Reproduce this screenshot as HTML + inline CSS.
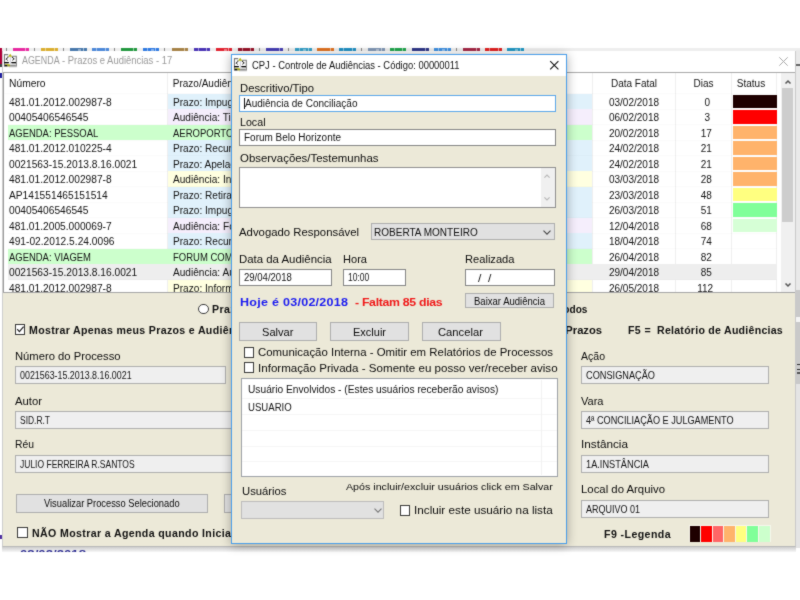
<!DOCTYPE html>
<html><head><meta charset="utf-8"><title>CPJ</title><style>
html,body{margin:0;padding:0;background:#fff;}
body{width:800px;height:600px;position:relative;overflow:hidden;font-family:"Liberation Sans",sans-serif;}
#pg{position:absolute;left:0;top:0;width:800px;height:600px;overflow:hidden;background:#fff;filter:url(#soft);}
.b{position:absolute;box-sizing:border-box;}
.t{position:absolute;white-space:pre;line-height:12px;font-family:"Liberation Sans",sans-serif;}
.c{position:absolute;overflow:hidden;}
svg{position:absolute;overflow:visible;}
</style></head><body><svg width="0" height="0" style="position:absolute"><filter id="soft" x="0" y="0" width="100%" height="100%" color-interpolation-filters="sRGB"><feConvolveMatrix order="3" kernelMatrix="0.025 0.075 0.025 0.075 0.6 0.075 0.025 0.075 0.025" edgeMode="duplicate" preserveAlpha="true"/></filter></svg><div id="pg">
<div class="b" style="left:0.00px;top:47.60px;width:800.00px;height:3.70px;background:#eeeeee;"></div>
<div class="b" style="left:0.00px;top:47.90px;width:2.00px;height:3.20px;background:#b00038;opacity:0.92;"></div>
<div class="b" style="left:13.00px;top:47.90px;width:16.00px;height:3.20px;background:#e6199a;opacity:0.92;"></div>
<div class="b" style="left:25.20px;top:47.90px;width:1.30px;height:3.20px;background:rgba(255,255,255,0.5);"></div>
<div class="b" style="left:41.00px;top:47.90px;width:17.00px;height:3.20px;background:#d8a820;opacity:0.92;"></div>
<div class="b" style="left:54.20px;top:47.90px;width:1.30px;height:3.20px;background:rgba(255,255,255,0.5);"></div>
<div class="b" style="left:44.60px;top:47.90px;width:1.40px;height:3.20px;background:rgba(255,255,255,0.45);"></div>
<div class="b" style="left:70.00px;top:47.90px;width:17.00px;height:3.20px;background:#3a6ea5;opacity:0.92;"></div>
<div class="b" style="left:83.20px;top:47.90px;width:1.30px;height:3.20px;background:rgba(255,255,255,0.5);"></div>
<div class="b" style="left:78.00px;top:48.60px;width:2.50px;height:2.50px;background:rgba(255,255,255,0.4);"></div>
<div class="b" style="left:92.00px;top:47.90px;width:17.00px;height:3.20px;background:#3f7fd6;opacity:0.92;"></div>
<div class="b" style="left:105.20px;top:47.90px;width:1.30px;height:3.20px;background:rgba(255,255,255,0.5);"></div>
<div class="b" style="left:95.60px;top:47.90px;width:1.40px;height:3.20px;background:rgba(255,255,255,0.45);"></div>
<div class="b" style="left:121.00px;top:47.90px;width:16.00px;height:3.20px;background:#109030;opacity:0.92;"></div>
<div class="b" style="left:133.20px;top:47.90px;width:1.30px;height:3.20px;background:rgba(255,255,255,0.5);"></div>
<div class="b" style="left:143.00px;top:47.90px;width:16.00px;height:3.20px;background:#2070e0;opacity:0.92;"></div>
<div class="b" style="left:155.20px;top:47.90px;width:1.30px;height:3.20px;background:rgba(255,255,255,0.5);"></div>
<div class="b" style="left:146.60px;top:47.90px;width:1.40px;height:3.20px;background:rgba(255,255,255,0.45);"></div>
<div class="b" style="left:151.00px;top:48.60px;width:2.50px;height:2.50px;background:rgba(255,255,255,0.4);"></div>
<div class="b" style="left:172.00px;top:47.90px;width:16.00px;height:3.20px;background:#a07838;opacity:0.92;"></div>
<div class="b" style="left:184.20px;top:47.90px;width:1.30px;height:3.20px;background:rgba(255,255,255,0.5);"></div>
<div class="b" style="left:194.00px;top:47.90px;width:16.00px;height:3.20px;background:#3c24b0;opacity:0.92;"></div>
<div class="b" style="left:206.20px;top:47.90px;width:1.30px;height:3.20px;background:rgba(255,255,255,0.5);"></div>
<div class="b" style="left:197.60px;top:47.90px;width:1.40px;height:3.20px;background:rgba(255,255,255,0.45);"></div>
<div class="b" style="left:216.00px;top:47.90px;width:16.00px;height:3.20px;background:#e01020;opacity:0.92;"></div>
<div class="b" style="left:228.20px;top:47.90px;width:1.30px;height:3.20px;background:rgba(255,255,255,0.5);"></div>
<div class="b" style="left:224.00px;top:48.60px;width:2.50px;height:2.50px;background:rgba(255,255,255,0.4);"></div>
<div class="b" style="left:238.00px;top:47.90px;width:16.00px;height:3.20px;background:#900018;opacity:0.92;"></div>
<div class="b" style="left:250.20px;top:47.90px;width:1.30px;height:3.20px;background:rgba(255,255,255,0.5);"></div>
<div class="b" style="left:241.60px;top:47.90px;width:1.40px;height:3.20px;background:rgba(255,255,255,0.45);"></div>
<div class="b" style="left:266.00px;top:47.90px;width:17.00px;height:3.20px;background:#3830b0;opacity:0.92;"></div>
<div class="b" style="left:279.20px;top:47.90px;width:1.30px;height:3.20px;background:rgba(255,255,255,0.5);"></div>
<div class="b" style="left:295.00px;top:47.90px;width:17.00px;height:3.20px;background:#2498c4;opacity:0.92;"></div>
<div class="b" style="left:308.20px;top:47.90px;width:1.30px;height:3.20px;background:rgba(255,255,255,0.5);"></div>
<div class="b" style="left:298.60px;top:47.90px;width:1.40px;height:3.20px;background:rgba(255,255,255,0.45);"></div>
<div class="b" style="left:303.00px;top:48.60px;width:2.50px;height:2.50px;background:rgba(255,255,255,0.4);"></div>
<div class="b" style="left:317.00px;top:47.90px;width:17.00px;height:3.20px;background:#e06810;opacity:0.92;"></div>
<div class="b" style="left:330.20px;top:47.90px;width:1.30px;height:3.20px;background:rgba(255,255,255,0.5);"></div>
<div class="b" style="left:339.00px;top:47.90px;width:17.00px;height:3.20px;background:#1088c0;opacity:0.92;"></div>
<div class="b" style="left:352.20px;top:47.90px;width:1.30px;height:3.20px;background:rgba(255,255,255,0.5);"></div>
<div class="b" style="left:342.60px;top:47.90px;width:1.40px;height:3.20px;background:rgba(255,255,255,0.45);"></div>
<div class="b" style="left:368.00px;top:47.90px;width:17.00px;height:3.20px;background:#7890b0;opacity:0.92;"></div>
<div class="b" style="left:381.20px;top:47.90px;width:1.30px;height:3.20px;background:rgba(255,255,255,0.5);"></div>
<div class="b" style="left:376.00px;top:48.60px;width:2.50px;height:2.50px;background:rgba(255,255,255,0.4);"></div>
<div class="b" style="left:390.00px;top:47.90px;width:16.00px;height:3.20px;background:#10a040;opacity:0.92;"></div>
<div class="b" style="left:402.20px;top:47.90px;width:1.30px;height:3.20px;background:rgba(255,255,255,0.5);"></div>
<div class="b" style="left:393.60px;top:47.90px;width:1.40px;height:3.20px;background:rgba(255,255,255,0.45);"></div>
<div class="b" style="left:412.00px;top:47.90px;width:17.00px;height:3.20px;background:#202880;opacity:0.92;"></div>
<div class="b" style="left:425.20px;top:47.90px;width:1.30px;height:3.20px;background:rgba(255,255,255,0.5);"></div>
<div class="b" style="left:434.00px;top:47.90px;width:17.00px;height:3.20px;background:#3088e0;opacity:0.92;"></div>
<div class="b" style="left:447.20px;top:47.90px;width:1.30px;height:3.20px;background:rgba(255,255,255,0.5);"></div>
<div class="b" style="left:437.60px;top:47.90px;width:1.40px;height:3.20px;background:rgba(255,255,255,0.45);"></div>
<div class="b" style="left:442.00px;top:48.60px;width:2.50px;height:2.50px;background:rgba(255,255,255,0.4);"></div>
<div class="b" style="left:463.00px;top:47.90px;width:17.00px;height:3.20px;background:#a01838;opacity:0.92;"></div>
<div class="b" style="left:476.20px;top:47.90px;width:1.30px;height:3.20px;background:rgba(255,255,255,0.5);"></div>
<div class="b" style="left:485.00px;top:47.90px;width:17.00px;height:3.20px;background:#e01010;opacity:0.92;"></div>
<div class="b" style="left:498.20px;top:47.90px;width:1.30px;height:3.20px;background:rgba(255,255,255,0.5);"></div>
<div class="b" style="left:488.60px;top:47.90px;width:1.40px;height:3.20px;background:rgba(255,255,255,0.45);"></div>
<div class="b" style="left:507.00px;top:47.90px;width:17.00px;height:3.20px;background:#1090c0;opacity:0.92;"></div>
<div class="b" style="left:520.20px;top:47.90px;width:1.30px;height:3.20px;background:rgba(255,255,255,0.5);"></div>
<div class="b" style="left:515.00px;top:48.60px;width:2.50px;height:2.50px;background:rgba(255,255,255,0.4);"></div>
<div class="b" style="left:6.00px;top:48.00px;width:1.00px;height:3.00px;background:#888;"></div>
<div class="b" style="left:34.00px;top:48.00px;width:1.00px;height:3.00px;background:#888;"></div>
<div class="b" style="left:63.00px;top:48.00px;width:1.00px;height:3.00px;background:#888;"></div>
<div class="b" style="left:114.00px;top:48.00px;width:1.00px;height:3.00px;background:#888;"></div>
<div class="b" style="left:164.00px;top:48.00px;width:1.00px;height:3.00px;background:#888;"></div>
<div class="b" style="left:259.00px;top:48.00px;width:1.00px;height:3.00px;background:#888;"></div>
<div class="b" style="left:288.00px;top:48.00px;width:1.00px;height:3.00px;background:#888;"></div>
<div class="b" style="left:361.00px;top:48.00px;width:1.00px;height:3.00px;background:#888;"></div>
<div class="b" style="left:456.00px;top:48.00px;width:1.00px;height:3.00px;background:#888;"></div>
<div class="b" style="left:0.00px;top:48.00px;width:1.60px;height:16.00px;background:#b00038;"></div>
<div class="b" style="left:0.00px;top:64.00px;width:2.00px;height:2.50px;background:#444;"></div>
<div class="b" style="left:0.00px;top:73.00px;width:1.60px;height:5.00px;background:#2020a0;"></div>
<div class="b" style="left:0.00px;top:535.00px;width:2.00px;height:4.00px;background:#5030a0;"></div>
<div class="b" style="left:796.00px;top:50.00px;width:4.00px;height:240.00px;background:#e9e9e9;"></div>
<div class="b" style="left:796.00px;top:64.00px;width:4.00px;height:1.60px;background:#666;"></div>
<div class="b" style="left:796.00px;top:290.00px;width:4.00px;height:94.00px;background:#c9c9c9;"></div>
<div class="b" style="left:796.00px;top:317.00px;width:4.00px;height:5.00px;background:#f4f4f4;"></div>
<div class="b" style="left:797.00px;top:363.60px;width:3.00px;height:1.60px;background:#333;"></div>
<div class="b" style="left:797.00px;top:368.60px;width:3.00px;height:1.60px;background:#333;"></div>
<div class="b" style="left:797.00px;top:372.40px;width:3.00px;height:1.20px;background:#555;"></div>
<div class="b" style="left:796.00px;top:384.00px;width:4.00px;height:164.00px;background:#e4e4e4;"></div>
<div class="b" style="left:2.00px;top:544.00px;width:794.00px;height:8.20px;background:linear-gradient(#c4c4c4 0%,#cfcfcf 40%,#f6f6f6 100%);"></div>
<span class="t" id="t0" style="top:548px;font-size:11px;color:#2a2a90;font-weight:bold;left:20.00px;transform-origin:0 10px;transform:scaleX(1.1986);">03/02/2018</span>
<div class="b" style="left:0.00px;top:552.00px;width:800.00px;height:20.00px;background:#fff;"></div>
<div class="b" style="left:2.00px;top:50.50px;width:794.00px;height:496.70px;background:#ECE9D8;border:1px solid #b9b9b9;border-top-color:#cfcfcf;border-right-color:#c9c9c9;border-left-color:#cdcdcd;"></div>
<div class="b" style="left:3.00px;top:51.30px;width:792.00px;height:21.00px;background:#fff;"></div>
<svg style="left:4.2px;top:54.0px" width="12.8" height="13.2" viewBox="0 0 12.8 13.2">
<rect x="0.4" y="0.6" width="12" height="12" fill="#fff"/>
<path d="M0.45 12.6V0.6H4.2M8.2 2.3H12.3V12.6" stroke="#7c7c7c" stroke-width="1.1" fill="none"/>
<rect x="5.85" y="2.6" width="0.7" height="7.8" fill="#b4b4c6"/>
<path d="M4.3 2.6L1.9 5.6M8.1 2.9L10.5 5.6" stroke="#222" stroke-width="1.15" fill="none" stroke-dasharray="1.4 0.4"/>
<path d="M2.4 5.1L3.7 6.6M8.6 6.6L9.6 4.9" stroke="#333" stroke-width="1" fill="none"/>
<path d="M0.3 7.9Q2.4 9.6 4.7 7.9V9.1H0.3ZM7.5 7.9Q9.6 9.6 11.9 7.9V9.1H7.5Z" fill="#000"/>
<rect x="0.3" y="8.0" width="4.4" height="1.35" fill="#000"/><rect x="7.5" y="8.0" width="4.4" height="1.35" fill="#000"/>
<polygon points="3.9,2.8 6.2,-0.3 8.4,2.8" fill="#b4b81c"/>
<rect x="1" y="10" width="4.8" height="0.9" fill="#c2c632"/><rect x="5.8" y="10" width="5.4" height="0.9" fill="#ddd"/>
<rect x="0.6" y="10.9" width="3" height="1.6" fill="#111"/><rect x="3.6" y="10.9" width="2.5" height="1.6" fill="#9a9e1c"/><rect x="6.1" y="10.9" width="5.7" height="1.6" fill="#8f8f8f"/>
<rect x="5" y="12.5" width="7.8" height="0.7" fill="#a5a5a5"/>
</svg>
<span class="t" id="t1" style="top:55px;font-size:10.3px;color:#9a9a9a;left:21.60px;transform-origin:0 9px;transform:scale(0.8644,1.0);">AGENDA</span>
<span class="t" id="t2" style="top:55px;font-size:10.3px;color:#9a9a9a;left:62.40px;transform-origin:0 9px;transform:scale(0.9168,1.0);">- Prazos e Audiências - 17</span>
<svg style="left:779.2px;top:56.5px" width="9" height="9" viewBox="0 0 9 9"><path d="M0.3 0.3L8.7 8.7M8.7 0.3L0.3 8.7" stroke="#a8a8a8" stroke-width="1" fill="none"/></svg>
<div class="b" style="left:3.00px;top:72.00px;width:792.00px;height:1.30px;background:#a9a9a9;"></div>
<div class="b" style="left:3.00px;top:73.30px;width:792.00px;height:219.50px;background:#fff;"></div>
<div class="b" style="left:167.10px;top:73.30px;width:1.00px;height:219.50px;background:#efefef;"></div>
<div class="b" style="left:591.90px;top:73.30px;width:1.00px;height:219.50px;background:#efefef;"></div>
<div class="b" style="left:674.50px;top:73.30px;width:1.00px;height:219.50px;background:#efefef;"></div>
<div class="b" style="left:731.30px;top:73.30px;width:1.00px;height:219.50px;background:#efefef;"></div>
<div class="b" style="left:776.10px;top:73.30px;width:1.00px;height:219.50px;background:#efefef;"></div>
<span class="t" id="t3" style="top:78px;font-size:10.0px;color:#121212;left:9.00px;transform-origin:0 9px;transform:scaleX(1.0287);">Número</span>
<span class="t" id="t4" style="top:78px;font-size:10.0px;color:#121212;left:172.80px;transform-origin:0 9px;transform:scaleX(1.0000);">Prazo/Audiência</span>
<span class="t" id="t5" style="top:78px;font-size:10.0px;color:#121212;left:634.00px;transform-origin:50% 9px;transform:translateX(-50%) scaleX(1.0000);">Data Fatal</span>
<span class="t" id="t6" style="top:78px;font-size:10.0px;color:#121212;left:703.60px;transform-origin:50% 9px;transform:translateX(-50%) scaleX(1.0000);">Dias</span>
<span class="t" id="t7" style="top:78px;font-size:10.0px;color:#121212;left:751.00px;transform-origin:50% 9px;transform:translateX(-50%) scaleX(1.0000);">Status</span>
<div class="b" style="left:167.60px;top:93.70px;width:424.80px;height:15.50px;background:#e0f1fb;"></div>
<div class="b" style="left:7.50px;top:108.70px;width:769.10px;height:1.00px;background:rgba(0,0,0,0.014);"></div>
<div class="b" style="left:733.00px;top:94.70px;width:44.20px;height:13.70px;background:#1e0000;"></div>
<span class="t" id="t8" style="top:97px;font-size:10.0px;color:#121212;left:9.30px;transform-origin:0 9px;transform:scaleX(1.0200);">481.01.2012.002987-8</span>
<span class="t" id="t9" style="top:97px;font-size:10.0px;color:#121212;left:172.80px;transform-origin:0 9px;transform:scaleX(1.0100);">Prazo: Impugnação</span>
<span class="t" id="t10" style="top:97px;font-size:10.0px;color:#121212;left:634.00px;transform-origin:50% 9px;transform:translateX(-50%) scaleX(1.0000);">03/02/2018</span>
<span class="t" id="t11" style="top:97px;font-size:10.0px;color:#121212;left:707.20px;transform-origin:50% 9px;transform:translateX(-50%) scaleX(1.0000);">0</span>
<div class="b" style="left:167.60px;top:109.20px;width:424.80px;height:15.50px;background:#f5eefc;"></div>
<div class="b" style="left:7.50px;top:124.20px;width:769.10px;height:1.00px;background:rgba(0,0,0,0.014);"></div>
<div class="b" style="left:733.00px;top:110.20px;width:44.20px;height:13.70px;background:#ff0000;"></div>
<span class="t" id="t12" style="top:112px;font-size:10.0px;color:#121212;left:9.30px;transform-origin:0 9px;transform:scaleX(1.0200);">00405406546545</span>
<span class="t" id="t13" style="top:112px;font-size:10.0px;color:#121212;left:172.80px;transform-origin:0 9px;transform:scaleX(1.0100);">Audiência: Tipo</span>
<span class="t" id="t14" style="top:112px;font-size:10.0px;color:#121212;left:634.00px;transform-origin:50% 9px;transform:translateX(-50%) scaleX(1.0000);">06/02/2018</span>
<span class="t" id="t15" style="top:112px;font-size:10.0px;color:#121212;left:707.20px;transform-origin:50% 9px;transform:translateX(-50%) scaleX(1.0000);">3</span>
<div class="b" style="left:7.50px;top:124.70px;width:584.90px;height:15.50px;background:#ccffcc;"></div>
<div class="b" style="left:7.50px;top:139.70px;width:769.10px;height:1.00px;background:rgba(0,0,0,0.014);"></div>
<div class="b" style="left:733.00px;top:125.70px;width:44.20px;height:13.70px;background:#ffb36b;"></div>
<span class="t" id="t16" style="top:128px;font-size:10.0px;color:#121212;left:9.30px;transform-origin:0 9px;transform:scaleX(0.9450);">AGENDA: PESSOAL</span>
<span class="t" id="t17" style="top:128px;font-size:10.0px;color:#121212;left:172.80px;transform-origin:0 9px;transform:scaleX(0.9500);">AEROPORTO</span>
<span class="t" id="t18" style="top:128px;font-size:10.0px;color:#121212;left:634.00px;transform-origin:50% 9px;transform:translateX(-50%) scaleX(1.0000);">20/02/2018</span>
<span class="t" id="t19" style="top:128px;font-size:10.0px;color:#121212;left:706.30px;transform-origin:50% 9px;transform:translateX(-50%) scaleX(1.0000);">17</span>
<div class="b" style="left:167.60px;top:140.20px;width:424.80px;height:15.50px;background:#e0f1fb;"></div>
<div class="b" style="left:7.50px;top:155.20px;width:769.10px;height:1.00px;background:rgba(0,0,0,0.014);"></div>
<div class="b" style="left:733.00px;top:141.20px;width:44.20px;height:13.70px;background:#ffb36b;"></div>
<span class="t" id="t20" style="top:143px;font-size:10.0px;color:#121212;left:9.30px;transform-origin:0 9px;transform:scaleX(1.0200);">481.01.2012.010225-4</span>
<span class="t" id="t21" style="top:143px;font-size:10.0px;color:#121212;left:172.80px;transform-origin:0 9px;transform:scaleX(1.0100);">Prazo: Recurso</span>
<span class="t" id="t22" style="top:143px;font-size:10.0px;color:#121212;left:634.00px;transform-origin:50% 9px;transform:translateX(-50%) scaleX(1.0000);">24/02/2018</span>
<span class="t" id="t23" style="top:143px;font-size:10.0px;color:#121212;left:706.30px;transform-origin:50% 9px;transform:translateX(-50%) scaleX(1.0000);">21</span>
<div class="b" style="left:167.60px;top:155.70px;width:424.80px;height:15.50px;background:#e0f1fb;"></div>
<div class="b" style="left:7.50px;top:170.70px;width:769.10px;height:1.00px;background:rgba(0,0,0,0.014);"></div>
<div class="b" style="left:733.00px;top:156.70px;width:44.20px;height:13.70px;background:#ffb36b;"></div>
<span class="t" id="t24" style="top:159px;font-size:10.0px;color:#121212;left:9.30px;transform-origin:0 9px;transform:scaleX(1.0200);">0021563-15.2013.8.16.0021</span>
<span class="t" id="t25" style="top:159px;font-size:10.0px;color:#121212;left:172.80px;transform-origin:0 9px;transform:scaleX(1.0100);">Prazo: Apelação</span>
<span class="t" id="t26" style="top:159px;font-size:10.0px;color:#121212;left:634.00px;transform-origin:50% 9px;transform:translateX(-50%) scaleX(1.0000);">24/02/2018</span>
<span class="t" id="t27" style="top:159px;font-size:10.0px;color:#121212;left:706.30px;transform-origin:50% 9px;transform:translateX(-50%) scaleX(1.0000);">21</span>
<div class="b" style="left:167.60px;top:171.20px;width:424.80px;height:15.50px;background:#ffffe0;"></div>
<div class="b" style="left:7.50px;top:186.20px;width:769.10px;height:1.00px;background:rgba(0,0,0,0.014);"></div>
<div class="b" style="left:733.00px;top:172.20px;width:44.20px;height:13.70px;background:#ffb36b;"></div>
<span class="t" id="t28" style="top:174px;font-size:10.0px;color:#121212;left:9.30px;transform-origin:0 9px;transform:scaleX(1.0200);">481.01.2012.002987-8</span>
<span class="t" id="t29" style="top:174px;font-size:10.0px;color:#121212;left:172.80px;transform-origin:0 9px;transform:scaleX(1.0100);">Audiência: Instrução</span>
<span class="t" id="t30" style="top:174px;font-size:10.0px;color:#121212;left:634.00px;transform-origin:50% 9px;transform:translateX(-50%) scaleX(1.0000);">03/03/2018</span>
<span class="t" id="t31" style="top:174px;font-size:10.0px;color:#121212;left:706.30px;transform-origin:50% 9px;transform:translateX(-50%) scaleX(1.0000);">28</span>
<div class="b" style="left:167.60px;top:186.70px;width:424.80px;height:15.50px;background:#e0f1fb;"></div>
<div class="b" style="left:7.50px;top:201.70px;width:769.10px;height:1.00px;background:rgba(0,0,0,0.014);"></div>
<div class="b" style="left:733.00px;top:187.70px;width:44.20px;height:13.70px;background:#ffff80;"></div>
<span class="t" id="t32" style="top:190px;font-size:10.0px;color:#121212;left:9.30px;transform-origin:0 9px;transform:scaleX(1.0200);">AP141551465151514</span>
<span class="t" id="t33" style="top:190px;font-size:10.0px;color:#121212;left:172.80px;transform-origin:0 9px;transform:scaleX(1.0100);">Prazo: Retirar</span>
<span class="t" id="t34" style="top:190px;font-size:10.0px;color:#121212;left:634.00px;transform-origin:50% 9px;transform:translateX(-50%) scaleX(1.0000);">23/03/2018</span>
<span class="t" id="t35" style="top:190px;font-size:10.0px;color:#121212;left:706.30px;transform-origin:50% 9px;transform:translateX(-50%) scaleX(1.0000);">48</span>
<div class="b" style="left:167.60px;top:202.20px;width:424.80px;height:15.50px;background:#e0f1fb;"></div>
<div class="b" style="left:7.50px;top:217.20px;width:769.10px;height:1.00px;background:rgba(0,0,0,0.014);"></div>
<div class="b" style="left:733.00px;top:203.20px;width:44.20px;height:13.70px;background:#80ff99;"></div>
<span class="t" id="t36" style="top:205px;font-size:10.0px;color:#121212;left:9.30px;transform-origin:0 9px;transform:scaleX(1.0200);">00405406546545</span>
<span class="t" id="t37" style="top:205px;font-size:10.0px;color:#121212;left:172.80px;transform-origin:0 9px;transform:scaleX(1.0100);">Prazo: Impugnação</span>
<span class="t" id="t38" style="top:205px;font-size:10.0px;color:#121212;left:634.00px;transform-origin:50% 9px;transform:translateX(-50%) scaleX(1.0000);">26/03/2018</span>
<span class="t" id="t39" style="top:205px;font-size:10.0px;color:#121212;left:706.30px;transform-origin:50% 9px;transform:translateX(-50%) scaleX(1.0000);">51</span>
<div class="b" style="left:167.60px;top:217.70px;width:424.80px;height:15.50px;background:#f5eefc;"></div>
<div class="b" style="left:7.50px;top:232.70px;width:769.10px;height:1.00px;background:rgba(0,0,0,0.014);"></div>
<div class="b" style="left:733.00px;top:218.70px;width:44.20px;height:13.70px;background:#d6ffd6;"></div>
<span class="t" id="t40" style="top:221px;font-size:10.0px;color:#121212;left:9.30px;transform-origin:0 9px;transform:scaleX(1.0200);">481.01.2005.000069-7</span>
<span class="t" id="t41" style="top:221px;font-size:10.0px;color:#121212;left:172.80px;transform-origin:0 9px;transform:scaleX(1.0100);">Audiência: Forum</span>
<span class="t" id="t42" style="top:221px;font-size:10.0px;color:#121212;left:634.00px;transform-origin:50% 9px;transform:translateX(-50%) scaleX(1.0000);">12/04/2018</span>
<span class="t" id="t43" style="top:221px;font-size:10.0px;color:#121212;left:706.30px;transform-origin:50% 9px;transform:translateX(-50%) scaleX(1.0000);">68</span>
<div class="b" style="left:167.60px;top:233.20px;width:424.80px;height:15.50px;background:#e0f1fb;"></div>
<div class="b" style="left:7.50px;top:248.20px;width:769.10px;height:1.00px;background:rgba(0,0,0,0.014);"></div>
<span class="t" id="t44" style="top:236px;font-size:10.0px;color:#121212;left:9.30px;transform-origin:0 9px;transform:scaleX(1.0200);">491-02.2012.5.24.0096</span>
<span class="t" id="t45" style="top:236px;font-size:10.0px;color:#121212;left:172.80px;transform-origin:0 9px;transform:scaleX(1.0100);">Prazo: Recurso</span>
<span class="t" id="t46" style="top:236px;font-size:10.0px;color:#121212;left:634.00px;transform-origin:50% 9px;transform:translateX(-50%) scaleX(1.0000);">18/04/2018</span>
<span class="t" id="t47" style="top:236px;font-size:10.0px;color:#121212;left:706.30px;transform-origin:50% 9px;transform:translateX(-50%) scaleX(1.0000);">74</span>
<div class="b" style="left:7.50px;top:248.70px;width:584.90px;height:15.50px;background:#ccffcc;"></div>
<div class="b" style="left:7.50px;top:263.70px;width:769.10px;height:1.00px;background:rgba(0,0,0,0.014);"></div>
<span class="t" id="t48" style="top:252px;font-size:10.0px;color:#121212;left:9.30px;transform-origin:0 9px;transform:scaleX(0.9450);">AGENDA: VIAGEM</span>
<span class="t" id="t49" style="top:252px;font-size:10.0px;color:#121212;left:172.80px;transform-origin:0 9px;transform:scaleX(0.9500);">FORUM COMARCA</span>
<span class="t" id="t50" style="top:252px;font-size:10.0px;color:#121212;left:634.00px;transform-origin:50% 9px;transform:translateX(-50%) scaleX(1.0000);">26/04/2018</span>
<span class="t" id="t51" style="top:252px;font-size:10.0px;color:#121212;left:706.30px;transform-origin:50% 9px;transform:translateX(-50%) scaleX(1.0000);">82</span>
<div class="b" style="left:7.50px;top:264.20px;width:769.10px;height:15.50px;background:#eeeeee;"></div>
<div class="b" style="left:7.50px;top:279.20px;width:769.10px;height:1.00px;background:rgba(0,0,0,0.014);"></div>
<span class="t" id="t52" style="top:267px;font-size:10.0px;color:#121212;left:9.30px;transform-origin:0 9px;transform:scaleX(1.0200);">0021563-15.2013.8.16.0021</span>
<span class="t" id="t53" style="top:267px;font-size:10.0px;color:#121212;left:172.80px;transform-origin:0 9px;transform:scaleX(1.0100);">Audiência: Audiência</span>
<span class="t" id="t54" style="top:267px;font-size:10.0px;color:#121212;left:634.00px;transform-origin:50% 9px;transform:translateX(-50%) scaleX(1.0000);">29/04/2018</span>
<span class="t" id="t55" style="top:267px;font-size:10.0px;color:#121212;left:706.30px;transform-origin:50% 9px;transform:translateX(-50%) scaleX(1.0000);">85</span>
<div class="b" style="left:167.60px;top:279.70px;width:424.80px;height:12.70px;background:#ffffe0;"></div>
<span class="t" id="t56" style="top:283px;font-size:10.0px;color:#121212;left:9.30px;transform-origin:0 9px;transform:scaleX(1.0200);">481.01.2012.002987-8</span>
<span class="t" id="t57" style="top:283px;font-size:10.0px;color:#121212;left:172.80px;transform-origin:0 9px;transform:scaleX(1.0100);">Prazo: Informar</span>
<span class="t" id="t58" style="top:283px;font-size:10.0px;color:#121212;left:634.00px;transform-origin:50% 9px;transform:translateX(-50%) scaleX(1.0000);">26/05/2018</span>
<span class="t" id="t59" style="top:283px;font-size:10.0px;color:#121212;left:705.20px;transform-origin:50% 9px;transform:translateX(-50%) scaleX(1.0000);">112</span>
<div class="b" style="left:3.00px;top:93.20px;width:773.60px;height:1.00px;background:rgba(0,0,0,0.014);"></div>
<div class="b" style="left:781.00px;top:73.30px;width:13.60px;height:219.50px;background:#f0f0f0;"></div>
<div class="b" style="left:781.80px;top:88.00px;width:11.60px;height:134.00px;background:#cdcdcd;"></div>
<svg style="left:784.5px;top:79.6px" width="6" height="4" viewBox="0 0 6 4"><path d="M0.5 3.6L3 1L5.5 3.6" stroke="#555" stroke-width="1.5" fill="none"/></svg>
<svg style="left:784.5px;top:283.4px" width="6" height="4" viewBox="0 0 6 4"><path d="M0.5 0.4L3 3L5.5 0.4" stroke="#555" stroke-width="1.5" fill="none"/></svg>
<div class="b" style="left:2.50px;top:73.30px;width:1.00px;height:219.50px;background:#9a9a9a;"></div>
<div class="b" style="left:3.00px;top:292.20px;width:792.00px;height:1.20px;background:#a5a5a5;"></div>
<div class="b" style="left:198.20px;top:303.80px;width:10.60px;height:10.60px;background:#fff;border:1px solid #3a3a3a;border-radius:50%;"></div>
<span class="t" id="t60" style="top:304px;font-size:10.4px;color:#111;font-weight:bold;letter-spacing:0.400px;left:212.40px;transform-origin:0 9px;transform:scaleX(1.0200);">Prazos</span>
<div class="b" style="left:14.80px;top:324.20px;width:10.60px;height:10.60px;background:#fff;border:1px solid #3a3a3a;"></div>
<svg style="left:14.8px;top:324.2px" width="10.6" height="10.6" viewBox="0 0 10.6 10.6"><path d="M2.2 5.2L4.4 7.6L8.6 2.6" stroke="#222" stroke-width="1.25" fill="none"/></svg>
<span class="t" id="t61" style="top:325px;font-size:10.4px;color:#111;font-weight:bold;letter-spacing:0.320px;left:29.00px;transform-origin:0 9px;transform:scaleX(1.0200);">Mostrar Apenas meus Prazos e Audiências</span>
<span class="t" id="t62" style="top:351px;font-size:10.4px;color:#0c0c0c;left:15.00px;transform-origin:0 9px;transform:scaleX(1.0819);">Número do Processo</span>
<div class="b" style="left:15.10px;top:366.20px;width:210.50px;height:18.00px;background:#efefef;border:1px solid #aeaeae;"></div>
<span class="t" id="t63" style="top:370px;font-size:10.3px;color:#121212;left:20.40px;transform-origin:0 9px;transform:scale(0.8624,1.09);">0021563-15.2013.8.16.0021</span>
<span class="t" id="t64" style="top:396px;font-size:10.4px;color:#0c0c0c;left:15.00px;transform-origin:0 9px;transform:scaleX(1.0868);">Autor</span>
<div class="b" style="left:15.10px;top:410.70px;width:424.90px;height:17.90px;background:#efefef;border:1px solid #aeaeae;"></div>
<span class="t" id="t65" style="top:415px;font-size:10.3px;color:#121212;left:20.40px;transform-origin:0 9px;transform:scale(0.8191,1.09);">SID.R.T</span>
<span class="t" id="t66" style="top:439px;font-size:10.4px;color:#0c0c0c;left:15.00px;transform-origin:0 9px;transform:scaleX(0.9967);">Réu</span>
<div class="b" style="left:15.10px;top:454.80px;width:424.90px;height:18.20px;background:#efefef;border:1px solid #aeaeae;"></div>
<span class="t" id="t67" style="top:459px;font-size:10.3px;color:#121212;left:20.40px;transform-origin:0 9px;transform:scale(0.8253,1.09);">JULIO FERREIRA R.SANTOS</span>
<div class="b" style="left:16.00px;top:494.00px;width:191.60px;height:18.60px;background:#e1e1e1;border:1px solid #adadad;"></div>
<span class="t" id="t68" style="top:498px;font-size:10.3px;color:#0c0c0c;left:44.40px;transform-origin:0 9px;transform:scaleX(0.9053);">Visualizar Processo Selecionado</span>
<div class="b" style="left:223.50px;top:494.00px;width:191.50px;height:18.60px;background:#e1e1e1;border:1px solid #adadad;"></div>
<div class="b" style="left:17.20px;top:526.90px;width:10.80px;height:10.80px;background:#fff;border:1px solid #3a3a3a;"></div>
<span class="t" id="t69" style="top:528px;font-size:10.4px;color:#111;font-weight:bold;letter-spacing:0.360px;left:31.50px;transform-origin:0 9px;transform:scaleX(1.0200);">NÃO Mostrar a Agenda quando Iniciar</span>
<span class="t" id="t70" style="top:304px;font-size:10.4px;color:#111;font-weight:bold;right:212.70px;transform-origin:100% 9px;transform:scaleX(0.9700);">Todos</span>
<span class="t" id="t71" style="top:325px;font-size:10.4px;color:#111;font-weight:bold;right:198.00px;transform-origin:100% 9px;transform:scaleX(1.0800);">Prazos</span>
<span class="t" id="t72" style="top:325px;font-size:10.4px;color:#111;font-weight:bold;letter-spacing:0.388px;left:628.40px;transform-origin:0 9px;transform:scaleX(1.0200);">F5 =</span>
<span class="t" id="t73" style="top:325px;font-size:10.4px;color:#111;font-weight:bold;letter-spacing:0.241px;left:656.60px;transform-origin:0 9px;transform:scaleX(1.0200);">Relatório de Audiências</span>
<span class="t" id="t74" style="top:351px;font-size:10.4px;color:#0c0c0c;left:581.00px;transform-origin:0 9px;transform:scaleX(1.0132);">Ação</span>
<div class="b" style="left:580.50px;top:366.20px;width:188.90px;height:18.00px;background:#efefef;border:1px solid #aeaeae;"></div>
<span class="t" id="t75" style="top:370px;font-size:10.3px;color:#121212;left:586.40px;transform-origin:0 9px;transform:scale(0.8932,1.09);">CONSIGNAÇÃO</span>
<span class="t" id="t76" style="top:396px;font-size:10.4px;color:#0c0c0c;left:581.00px;transform-origin:0 9px;transform:scaleX(1.0619);">Vara</span>
<div class="b" style="left:580.50px;top:410.70px;width:188.90px;height:17.90px;background:#efefef;border:1px solid #aeaeae;"></div>
<span class="t" id="t77" style="top:415px;font-size:10.3px;color:#121212;left:586.40px;transform-origin:0 9px;transform:scale(0.8885,1.09);">4ª CONCILIAÇÃO E JULGAMENTO</span>
<span class="t" id="t78" style="top:439px;font-size:10.4px;color:#0c0c0c;left:581.00px;transform-origin:0 9px;transform:scaleX(1.1300);">Instância</span>
<div class="b" style="left:580.50px;top:454.80px;width:188.90px;height:18.20px;background:#efefef;border:1px solid #aeaeae;"></div>
<span class="t" id="t79" style="top:459px;font-size:10.3px;color:#121212;left:586.40px;transform-origin:0 9px;transform:scale(0.8950,1.09);">1A.INSTÂNCIA</span>
<span class="t" id="t80" style="top:484px;font-size:10.4px;color:#0c0c0c;left:581.00px;transform-origin:0 9px;transform:scaleX(1.0931);">Local do Arquivo</span>
<div class="b" style="left:580.50px;top:499.80px;width:188.90px;height:18.20px;background:#efefef;border:1px solid #aeaeae;"></div>
<span class="t" id="t81" style="top:504px;font-size:10.3px;color:#121212;left:586.40px;transform-origin:0 9px;transform:scale(0.8736,1.09);">ARQUIVO 01</span>
<span class="t" id="t82" style="top:529px;font-size:10.4px;color:#111;font-weight:bold;letter-spacing:0.408px;left:603.50px;transform-origin:0 9px;transform:scaleX(1.0200);">F9 -Legenda</span>
<div class="b" style="left:689.30px;top:525.40px;width:81.40px;height:16.20px;background:#f7f5ec;"></div>
<div class="b" style="left:689.60px;top:525.50px;width:10.50px;height:16.00px;background:#1e0000;"></div>
<div class="b" style="left:701.17px;top:525.50px;width:10.50px;height:16.00px;background:#ff0000;"></div>
<div class="b" style="left:712.74px;top:525.50px;width:10.50px;height:16.00px;background:#ff6666;"></div>
<div class="b" style="left:724.31px;top:525.50px;width:10.50px;height:16.00px;background:#ffb36b;"></div>
<div class="b" style="left:735.88px;top:525.50px;width:10.50px;height:16.00px;background:#ffff80;"></div>
<div class="b" style="left:747.45px;top:525.50px;width:10.50px;height:16.00px;background:#80ff99;"></div>
<div class="b" style="left:759.02px;top:525.50px;width:10.50px;height:16.00px;background:#ccffcc;"></div>
<div class="b" style="left:231.00px;top:54.20px;width:336.00px;height:489.80px;background:#ECE9D8;border:1px solid #4a9eea;box-shadow:0 1px 10px rgba(0,0,0,0.32);"></div>
<div class="b" style="left:232.00px;top:55.20px;width:334.00px;height:20.40px;background:#fff;"></div>
<svg style="left:234.1px;top:58.2px" width="12.8" height="13.2" viewBox="0 0 12.8 13.2">
<rect x="0.4" y="0.6" width="12" height="12" fill="#fff"/>
<path d="M0.45 12.6V0.6H4.2M8.2 2.3H12.3V12.6" stroke="#7c7c7c" stroke-width="1.1" fill="none"/>
<rect x="5.85" y="2.6" width="0.7" height="7.8" fill="#b4b4c6"/>
<path d="M4.3 2.6L1.9 5.6M8.1 2.9L10.5 5.6" stroke="#222" stroke-width="1.15" fill="none" stroke-dasharray="1.4 0.4"/>
<path d="M2.4 5.1L3.7 6.6M8.6 6.6L9.6 4.9" stroke="#333" stroke-width="1" fill="none"/>
<path d="M0.3 7.9Q2.4 9.6 4.7 7.9V9.1H0.3ZM7.5 7.9Q9.6 9.6 11.9 7.9V9.1H7.5Z" fill="#000"/>
<rect x="0.3" y="8.0" width="4.4" height="1.35" fill="#000"/><rect x="7.5" y="8.0" width="4.4" height="1.35" fill="#000"/>
<polygon points="3.9,2.8 6.2,-0.3 8.4,2.8" fill="#b4b81c"/>
<rect x="1" y="10" width="4.8" height="0.9" fill="#c2c632"/><rect x="5.8" y="10" width="5.4" height="0.9" fill="#ddd"/>
<rect x="0.6" y="10.9" width="3" height="1.6" fill="#111"/><rect x="3.6" y="10.9" width="2.5" height="1.6" fill="#9a9e1c"/><rect x="6.1" y="10.9" width="5.7" height="1.6" fill="#8f8f8f"/>
<rect x="5" y="12.5" width="7.8" height="0.7" fill="#a5a5a5"/>
</svg>
<span class="t" id="t83" style="top:60px;font-size:10.3px;color:#121212;left:252.00px;transform-origin:0 9px;transform:scale(0.9143,1.04);">CPJ - Controle de Audiências - Código: 00000011</span>
<svg style="left:549.7px;top:61px" width="8.6" height="8.6" viewBox="0 0 9 9"><path d="M0.2 0.2L8.8 8.8M8.8 0.2L0.2 8.8" stroke="#111" stroke-width="1.15" fill="none"/></svg>
<span class="t" id="t84" style="top:83px;font-size:10.4px;color:#0c0c0c;left:239.50px;transform-origin:0 9px;transform:scaleX(1.0830);">Descritivo/Tipo</span>
<div class="b" style="left:238.90px;top:94.60px;width:317.10px;height:17.00px;background:#fff;border:1px solid #5aa6ea;"></div>
<div class="b" style="left:244.20px;top:97.60px;width:1.00px;height:11.50px;background:#111;"></div>
<span class="t" id="t85" style="top:98px;font-size:10.0px;color:#121212;left:245.00px;transform-origin:0 9px;transform:scaleX(1.0018);">Audiência de Conciliação</span>
<span class="t" id="t86" style="top:117px;font-size:10.4px;color:#0c0c0c;left:239.50px;transform-origin:0 9px;transform:scaleX(1.0264);">Local</span>
<div class="b" style="left:238.90px;top:129.20px;width:317.10px;height:16.60px;background:#fff;border:1px solid #858585;"></div>
<span class="t" id="t87" style="top:132px;font-size:10.0px;color:#121212;left:243.75px;transform-origin:0 9px;transform:scaleX(0.9973);">Forum Belo Horizonte</span>
<span class="t" id="t88" style="top:153px;font-size:10.4px;color:#0c0c0c;left:239.50px;transform-origin:0 9px;transform:scaleX(1.1000);">Observações/Testemunhas</span>
<div class="b" style="left:239.00px;top:167.00px;width:316.50px;height:40.50px;background:#fff;border:1px solid #8f8f8f;"></div>
<div class="b" style="left:541.00px;top:168.00px;width:13.50px;height:38.50px;background:#f0f0f0;"></div>
<svg style="left:544px;top:173.9px" width="6" height="4" viewBox="0 0 6 4"><path d="M0.4 3.6L3 1L5.6 3.6" stroke="#b8b8b8" stroke-width="1.2" fill="none"/></svg>
<svg style="left:544px;top:197.2px" width="6" height="4" viewBox="0 0 6 4"><path d="M0.4 0.4L3 3L5.6 0.4" stroke="#b8b8b8" stroke-width="1.2" fill="none"/></svg>
<span class="t" id="t89" style="top:227px;font-size:10.4px;color:#0c0c0c;left:239.00px;transform-origin:0 9px;transform:scaleX(1.0932);">Advogado Responsável</span>
<div class="b" style="left:370.60px;top:223.40px;width:184.20px;height:17.00px;background:#e1e1e1;border:1px solid #adadad;"></div>
<span class="t" id="t90" style="top:227px;font-size:10.0px;color:#111;left:373.60px;transform-origin:0 9px;transform:scaleX(1.0016);">ROBERTA MONTEIRO</span>
<svg style="left:543px;top:230.4px" width="8" height="5" viewBox="0 0 8 5"><path d="M0.5 0.6L4 4.1L7.5 0.6" stroke="#444" stroke-width="1.1" fill="none"/></svg>
<span class="t" id="t91" style="top:254px;font-size:10.4px;color:#0c0c0c;left:239.00px;transform-origin:0 9px;transform:scaleX(1.0979);">Data da Audiência</span>
<span class="t" id="t92" style="top:254px;font-size:10.4px;color:#0c0c0c;left:343.00px;transform-origin:0 9px;transform:scaleX(1.0652);">Hora</span>
<span class="t" id="t93" style="top:254px;font-size:10.4px;color:#0c0c0c;left:464.70px;transform-origin:0 9px;transform:scaleX(1.0710);">Realizada</span>
<div class="b" style="left:239.00px;top:269.30px;width:92.60px;height:16.40px;background:#fff;border:1px solid #858585;"></div>
<span class="t" id="t94" style="top:272px;font-size:10.3px;color:#121212;left:243.80px;transform-origin:0 9px;transform:scaleX(0.9273);">29/04/2018</span>
<div class="b" style="left:342.60px;top:269.30px;width:63.20px;height:16.40px;background:#fff;border:1px solid #858585;"></div>
<span class="t" id="t95" style="top:272px;font-size:10.3px;color:#121212;left:348.40px;transform-origin:0 9px;transform:scaleX(0.8223);">10:00</span>
<div class="b" style="left:464.70px;top:269.30px;width:90.00px;height:16.40px;background:#fff;border:1px solid #858585;"></div>
<span class="t" id="t96" style="top:273px;font-size:10.3px;color:#121212;left:478.20px;transform-origin:0 9px;transform:scaleX(1.1787);">/  /</span>
<span class="t" id="t97" style="top:296px;font-size:11.2px;color:#1a1af0;font-weight:bold;letter-spacing:0.236px;left:239.50px;transform-origin:0 10px;transform:scaleX(1.1200);">Hoje é 03/02/2018</span>
<span class="t" id="t98" style="top:296px;font-size:11.2px;color:#f01818;font-weight:bold;letter-spacing:-0.281px;left:354.60px;transform-origin:0 10px;transform:scaleX(1.1000);">- Faltam 85 dias</span>
<div class="b" style="left:465.40px;top:293.30px;width:88.20px;height:14.60px;background:#e1e1e1;border:1px solid #adadad;"></div>
<span class="t" id="t99" style="top:296px;font-size:10.3px;color:#0c0c0c;left:474.00px;transform-origin:0 9px;transform:scaleX(0.9255);">Baixar Audiência</span>
<div class="b" style="left:239.00px;top:322.40px;width:78.00px;height:18.20px;background:#e1e1e1;border:1px solid #adadad;"></div>
<span class="t" id="t100" style="top:327px;font-size:10.4px;color:#0c0c0c;left:261.90px;transform-origin:0 9px;transform:scaleX(1.0661);">Salvar</span>
<div class="b" style="left:330.30px;top:322.40px;width:78.70px;height:18.20px;background:#e1e1e1;border:1px solid #adadad;"></div>
<span class="t" id="t101" style="top:327px;font-size:10.4px;color:#0c0c0c;left:353.20px;transform-origin:0 9px;transform:scaleX(1.0581);">Excluir</span>
<div class="b" style="left:422.20px;top:322.40px;width:78.50px;height:18.20px;background:#e1e1e1;border:1px solid #adadad;"></div>
<span class="t" id="t102" style="top:327px;font-size:10.4px;color:#0c0c0c;left:438.40px;transform-origin:0 9px;transform:scaleX(1.0819);">Cancelar</span>
<div class="b" style="left:243.80px;top:347.20px;width:10.40px;height:10.40px;background:#fff;border:1px solid #3a3a3a;"></div>
<span class="t" id="t103" style="top:347px;font-size:10.4px;color:#0c0c0c;left:258.00px;transform-origin:0 9px;transform:scaleX(1.0986);">Comunicação Interna - Omitir em Relatórios de Processos</span>
<div class="b" style="left:243.80px;top:362.20px;width:10.40px;height:10.40px;background:#fff;border:1px solid #3a3a3a;"></div>
<span class="t" id="t104" style="top:363px;font-size:10.4px;color:#0c0c0c;left:258.00px;transform-origin:0 9px;transform:scaleX(1.1156);">Informação Privada - Somente eu posso ver/receber aviso</span>
<div class="b" style="left:241.00px;top:378.20px;width:316.80px;height:98.80px;background:#fff;border:1px solid #9da1a7;"></div>
<div class="b" style="left:242.00px;top:398.20px;width:314.80px;height:1.00px;background:#f6f6f6;"></div>
<div class="b" style="left:242.00px;top:414.00px;width:314.80px;height:1.00px;background:#f6f6f6;"></div>
<div class="b" style="left:242.00px;top:429.90px;width:314.80px;height:1.00px;background:#f6f6f6;"></div>
<div class="b" style="left:242.00px;top:445.70px;width:314.80px;height:1.00px;background:#f6f6f6;"></div>
<div class="b" style="left:242.00px;top:460.80px;width:314.80px;height:1.00px;background:#f6f6f6;"></div>
<div class="b" style="left:540.80px;top:379.50px;width:1.00px;height:95.90px;background:#f1f1f1;"></div>
<span class="t" id="t105" style="top:384px;font-size:10.0px;color:#121212;left:248.00px;transform-origin:0 9px;transform:scaleX(1.0197);">Usuário Envolvidos - (Estes usuários receberão avisos)</span>
<span class="t" id="t106" style="top:402px;font-size:10.0px;color:#121212;left:248.00px;transform-origin:0 9px;transform:scaleX(0.9602);">USUARIO</span>
<span class="t" id="t107" style="top:486px;font-size:10.4px;color:#0c0c0c;left:241.75px;transform-origin:0 9px;transform:scaleX(1.0854);">Usuários</span>
<span class="t" id="t108" style="top:481px;font-size:9.4px;color:#0c0c0c;left:346.25px;transform-origin:0 9px;transform:scaleX(1.1370);">Após incluir/excluir usuários click em Salvar</span>
<div class="b" style="left:241.25px;top:501.30px;width:143.00px;height:17.30px;background:#e1e1e1;border:1px solid #bcbcbc;"></div>
<svg style="left:373.5px;top:508.3px" width="8" height="5" viewBox="0 0 8 5"><path d="M0.5 0.6L4 4.1L7.5 0.6" stroke="#777" stroke-width="1.1" fill="none"/></svg>
<div class="b" style="left:399.50px;top:505.30px;width:10.40px;height:10.40px;background:#fff;border:1px solid #3a3a3a;"></div>
<span class="t" id="t109" style="top:505px;font-size:10.4px;color:#0c0c0c;left:413.75px;transform-origin:0 9px;transform:scaleX(1.1278);">Incluir este usuário na lista</span>
</div></body></html>
